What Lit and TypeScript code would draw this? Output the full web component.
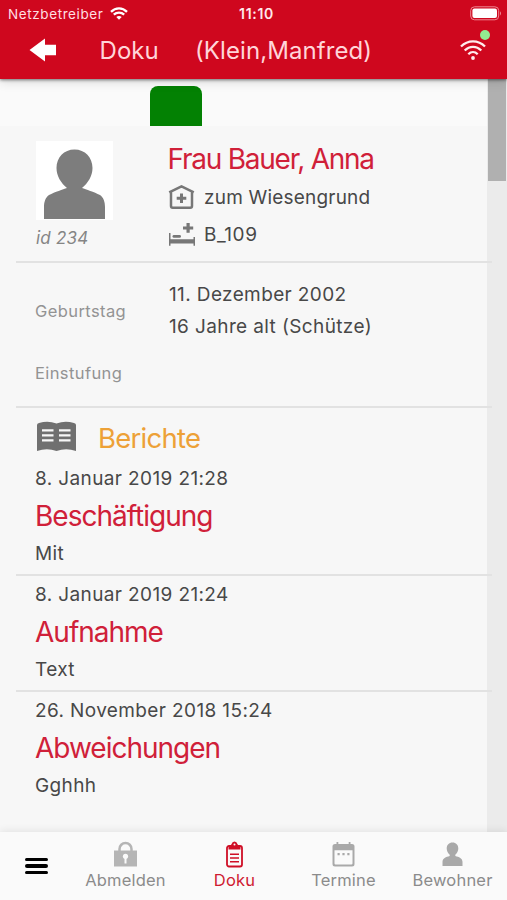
import { LitElement, html, css, svg } from "lit";
import { customElement } from "lit/decorators.js";

interface Report {
  date: string;
  title: string;
  text: string;
}

const reports: Report[] = [
  { date: "8. Januar 2019 21:28", title: "Beschäftigung", text: "Mit" },
  { date: "8. Januar 2019 21:24", title: "Aufnahme", text: "Text" },
  { date: "26. November 2018 15:24", title: "Abweichungen", text: "Gghhh" },
];

@customElement("app-header")
class AppHeader extends LitElement {
  static styles = css`
    :host { display: block; position: relative; z-index: 2; height: 79px; background: #cf071e; color: #fff;
      box-shadow: 0 1px 3px rgba(0, 0, 0, 0.5), 0 3px 10px rgba(0, 0, 0, 0.13); }
    .status { display: grid; grid-template-columns: 1fr auto 1fr; height: 28px; align-items: center; line-height: 28px;
      padding: 0 5px 0 8px; font-size: 13.5px; }
    .carrier { display: flex; align-items: center; gap: 7px; letter-spacing: 0.6px; color: #ffdfe2; }
    .carrier svg { margin-top: -2px; }
    .clock { font-weight: 600; font-size: 14px; letter-spacing: 0.7px; color: #ffe9eb; margin-left: 3px; }
    .battery { justify-self: end; display: block; margin-top: -2px; }
    .bar { display: flex; align-items: center; height: 44px; padding: 0 21px 0 29px; font-size: 24px; font-weight: 370;
      color: #ffd5d9; letter-spacing: 0.08px; white-space: nowrap; }
    .back { display: block; width: 28px; margin-right: 42.500px; }
    .title { width: 95.500px; }
    .user { flex: 1; }
    .net { position: relative; width: 26px; height: 20px; }
    .net svg { display: block; }
    .dot { position: absolute; right: -3.500px; top: -10px; width: 10px; height: 10px; border-radius: 50%; background: #93ed91; }
  `;
  render() {
    return html`
      <div class="status">
        <div class="carrier">Netzbetreiber
          <svg width="18" height="13" viewBox="0 0 18 13" fill="none" stroke="#fff" stroke-width="2.3">
            <path d="M1 4.900C5.600.3 12.400.3 17 4.900M3.800 7.700c3-2.900 7.400-2.900 10.400 0"/>
            <path d="M6.300 10.100c1.600-1.500 3.800-1.500 5.400 0L9 12.700z" fill="#fff" stroke="none"/>
          </svg>
        </div>
        <div class="clock">11:10</div>
        <svg class="battery" width="32" height="15" viewBox="0 0 32 15">
          <rect x=".7" y=".8" width="28" height="13" rx="3.800" fill="none" stroke="#ee8791" stroke-width="1"/>
          <rect x="2.400" y="2.600" width="24.600" height="9.400" rx="2" fill="#fff"/>
          <path d="M30 5.200q2 2.100 0 4.200z" fill="#ee8791"/>
        </svg>
      </div>
      <div class="bar">
        <svg class="back" width="28" height="24" viewBox="0 0 28 24">
          <path d="M.5 12 16 .5V6.800H27V17.300H16V23.500z" fill="#fff"/>
        </svg>
        <div class="title">Doku</div>
        <div class="user">(Klein,Manfred)</div>
        <div class="net">
          <svg width="26" height="20" viewBox="0 0 26 20" fill="none" stroke="#ffeced" stroke-width="2.300">
            <path d="M1 6.500C7.800-.4 18.200-.4 25 6.500M4.700 10.500c4.900-4.900 11.700-4.900 16.600 0M8.300 14.200c2.800-2.800 6.600-2.800 9.400 0"/>
            <circle cx="13" cy="18" r="1.900" fill="#ffeced" stroke="none"/>
          </svg>
          <span class="dot"></span>
        </div>
      </div>`;
  }
}

@customElement("resident-view")
class ResidentView extends LitElement {
  static styles = css`
    :host { display: flex; flex: 1; min-height: 0; background: #f7f7f7; color: #484848; font-size: 19px; }
    .page { width: 487px; display: flex; flex-direction: column; flex: none; position: relative; z-index: 1; }
    .tabs { height: 47px; background: #fafafa; display: flex; align-items: flex-end; padding-left: 150px; }
    .tab { width: 52px; height: 40px; background: #038103; border-radius: 8px 8px 0 0; }
    .content { width: 476px; margin-left: 16px; }
    .line { white-space: nowrap; }
    .person { display: grid; grid-template-columns: 131.500px 1fr; padding: 15px 0 0 20px; height: 120px; border-bottom: 2px solid #e2e2e2; }
    .photo { display: block; }
    .id { font-size: 17px; font-style: italic; color: #858585; line-height: 37px; letter-spacing: 0.2px; }
    .name { font-size: 28px; line-height: 38px; letter-spacing: -1.24px; color: #d02039; margin-top: -1px; }
    .place { display: flex; align-items: center; height: 37px; margin-top: 1px; gap: 9.500px; letter-spacing: 0.2px; }
    .place svg { margin-top: -1px; }
    .place + .place { margin-top: 0; letter-spacing: 0.6px; }
    .facts { display: grid; grid-template-columns: 134px 1fr; padding-left: 19px; height: 143px; border-bottom: 2px solid #e2e2e2; align-content: start; }
    .label { font-size: 16.500px; color: #939393; letter-spacing: 0.4px; }
    .birth { padding-top: 30px; line-height: 36px; }
    .values { padding-top: 16px; line-height: 32px; letter-spacing: 0.38px; }
    .level { line-height: 30px; padding-top: 15px; }
    .heading { display: flex; align-items: center; height: 46px; padding: 6px 0 0 20px; gap: 21px; }
    .heading svg { margin-top: -1px; }
    .heading .line { font-size: 27.500px; letter-spacing: -0.75px; color: #eda137; padding-top: 1px; }
    .report { padding: 2px 0 0 19px; height: 112px; border-bottom: 2px solid #e2e2e2; letter-spacing: 0.38px; }
    .report:last-child { border-bottom: 0; }
    .date { line-height: 34px; }
    .title { font-size: 28px; line-height: 40px; color: #d02039; letter-spacing: -1px; }
    .text { line-height: 36px; }
    .scroll { width: 20px; background: #ebebeb; }
    .thumb { width: 18px; height: 102px; margin-left: 1px; background: #b0b0b0; }
  `;
  render() {
    return html`
      <div class="page">
        <div class="tabs"><div class="tab"></div></div>
        <div class="content">
          <section class="person">
            <div>
              <svg class="photo" width="77" height="79" viewBox="0 0 77 79">
                <rect width="77" height="79" fill="#fff"/>
                <path fill="#7d7d7d" d="M38.500 8.500C49 8.500 56.500 16.500 56.500 27C56.500 35 52 42 46 47C50 48.500 58 51 64 54C67.500 56.500 69 61 69 66V78H8V66C8 61 9.500 56.500 13 54C19 51 27 48.500 31 47C25 42 20.500 35 20.500 27C20.500 16.500 28 8.500 38.500 8.500z"/>
              </svg>
              <div class="id line">id 234</div>
            </div>
            <div>
              <div class="name line">Frau Bauer, Anna</div>
              <div class="place line">
                <svg width="27" height="26" viewBox="0 0 27 26" fill="none" stroke="#777" stroke-width="2.500">
                  <path d="M3 8.500V22q0 1.700 1.700 1.700H22.300q1.700 0 1.700-1.700V8.500M1.200 8.300 13.500 2.300 25.800 8.300" stroke-linejoin="round"/>
                  <path d="M13.500 9.500V19M8.700 14.300H18.300" stroke-width="3"/>
                </svg>zum Wiesengrund
              </div>
              <div class="place line">
                <svg width="27" height="26" viewBox="0 0 27 26" fill="#777">
                  <path d="M1 12H2.500V18.300H25.500V16H27V24.800H25.500V22.500H2.500V24.800H1z"/>
                  <rect x="4.500" y="14" width="8.500" height="2.800" rx="1.400"/>
                  <path d="M18.500 2H21.700V5.400H25.200V8.400H21.700V11.800H18.500V8.400H15V5.400H18.500z"/>
                </svg>B_109
              </div>
            </div>
          </section>
          <section class="facts">
            <div class="label birth line">Geburtstag</div>
            <div class="values line"><div>11. Dezember 2002</div><div>16 Jahre alt (Schütze)</div></div>
            <div class="label level line">Einstufung</div>
          </section>
          <section>
            <div class="heading">
              <svg width="41" height="31" viewBox="0 0 41 31">
                <path fill="#707070" d="M1 4Q1 2.500 3 2Q12-.8 20.500 2.500Q29-.8 38 2Q40 2.500 40 4V30Q30 26.500 20.500 30Q11 26.500 1 30z"/>
                <path stroke="#f7f7f7" stroke-width="2.300" d="M6 9.300H17.500M6 14.300H17.500M6 19.300H17.500M23 9.300H34.500M23 14.300H34.500M23 19.300H34.500"/>
              </svg>
              <div class="line">Berichte</div>
            </div>
            ${reports.map((r) => html`
              <div class="report">
                <div class="date line">${r.date}</div>
                <div class="title line">${r.title}</div>
                <div class="text line">${r.text}</div>
              </div>`)}
          </section>
        </div>
      </div>
      <div class="scroll"><div class="thumb"></div></div>`;
  }
}

const icons = {
  lock: svg`<path d="M6.500 10V8a6 6 0 0 1 12 0v2" fill="none" stroke="#b5b5b5" stroke-width="2.500"/><rect x="1" y="9.500" width="23" height="16" fill="#b5b5b5"/><circle cx="12.500" cy="15.300" r="2.600" fill="#fafafa"/><path d="M11.500 16h2v6.500h-2z" fill="#fafafa"/>`,
  clip: svg`<rect x="5" y="5" width="15" height="20.500" rx="2" fill="none" stroke="#cf0f26" stroke-width="1.800"/><path d="M6.500 8.500V5.500Q8.500 5.300 9.300 3.500Q10.300.6 12.500.6T15.700 3.500Q16.500 5.300 18.500 5.500V8.500z" fill="#cf0f26"/><circle cx="12.500" cy="3.500" r="1" fill="#fafafa"/><path d="M8 13.300H17M8 17H17M8 20.700H17" stroke="#cf0f26" stroke-width="1.400"/>`,
  calendar: svg`<path fill="#a9a9a9" fill-rule="evenodd" d="M4 3H5.500V1H7.300V3H17.700V1H19.500V3H21Q23.500 3 23.500 5.500V23Q23.500 25.500 21 25.500H4Q1.500 25.500 1.500 23V5.500Q1.500 3 4 3zM3.500 9.300V22.500Q3.500 23.500 4.500 23.500H20.500Q21.500 23.500 21.500 22.500V9.300z"/><path fill="#a9a9a9" d="M6.500 12H8.700V14.200H6.500zM11.400 12H13.600V14.200H11.400zM16.300 12H18.500V14.200H16.300z"/>`,
  person: svg`<path fill="#a9a9a9" d="M12.500 1.500C16 1.500 18.300 4 18.300 7.500C18.300 10 17 12.300 15.300 13.800V15C19 16 22.500 17.200 22.500 21V25H2.500V21C2.500 17.200 6 16 9.700 15V13.800C8 12.300 6.700 10 6.700 7.500C6.700 4 9 1.500 12.500 1.500z"/>`,
};

@customElement("tab-bar")
class TabBar extends LitElement {
  static styles = css`
    :host { position: relative; z-index: 2; display: grid; grid-template-columns: 71px 109px 109px 109px 109px; height: 68px; background: #fafafa;
      color: #8b8b8b; font-size: 16.5px; box-shadow: 0 -1px 8px rgba(0, 0, 0, 0.09); }
    .menu { display: flex; flex-direction: column; gap: 3.200px; justify-content: center; padding-left: 25px; }
    .menu i { display: block; width: 23px; height: 3.300px; border-radius: 2px; background: #000; }
    .item { display: flex; flex-direction: column; align-items: center; padding-top: 9px; white-space: nowrap; letter-spacing: 0.2px; }
    .item svg { display: block; }
    .item span { line-height: 26px; margin-top: -1.500px; }
    .active { color: #cf1b32; }
  `;
  render() {
    const items = [
      ["Abmelden", icons.lock],
      ["Doku", icons.clip],
      ["Termine", icons.calendar],
      ["Bewohner", icons.person],
    ] as const;
    return html`
      <div class="menu"><i></i><i></i><i></i></div>
      ${items.map(([label, icon]) => html`
        <div class="item ${label === "Doku" ? "active" : ""}">
          <svg width="25" height="27" viewBox="0 0 25 27">${icon}</svg>
          <span>${label}</span>
        </div>`)}`;
  }
}

@customElement("app-root")
class AppRoot extends LitElement {
  static styles = css`
    :host { display: flex; flex-direction: column; width: 507px; height: 900px; overflow: hidden;
      font-family: Inter, "Liberation Sans", sans-serif; }
  `;
  render() {
    return html`<app-header></app-header><resident-view></resident-view><tab-bar></tab-bar>`;
  }
}
